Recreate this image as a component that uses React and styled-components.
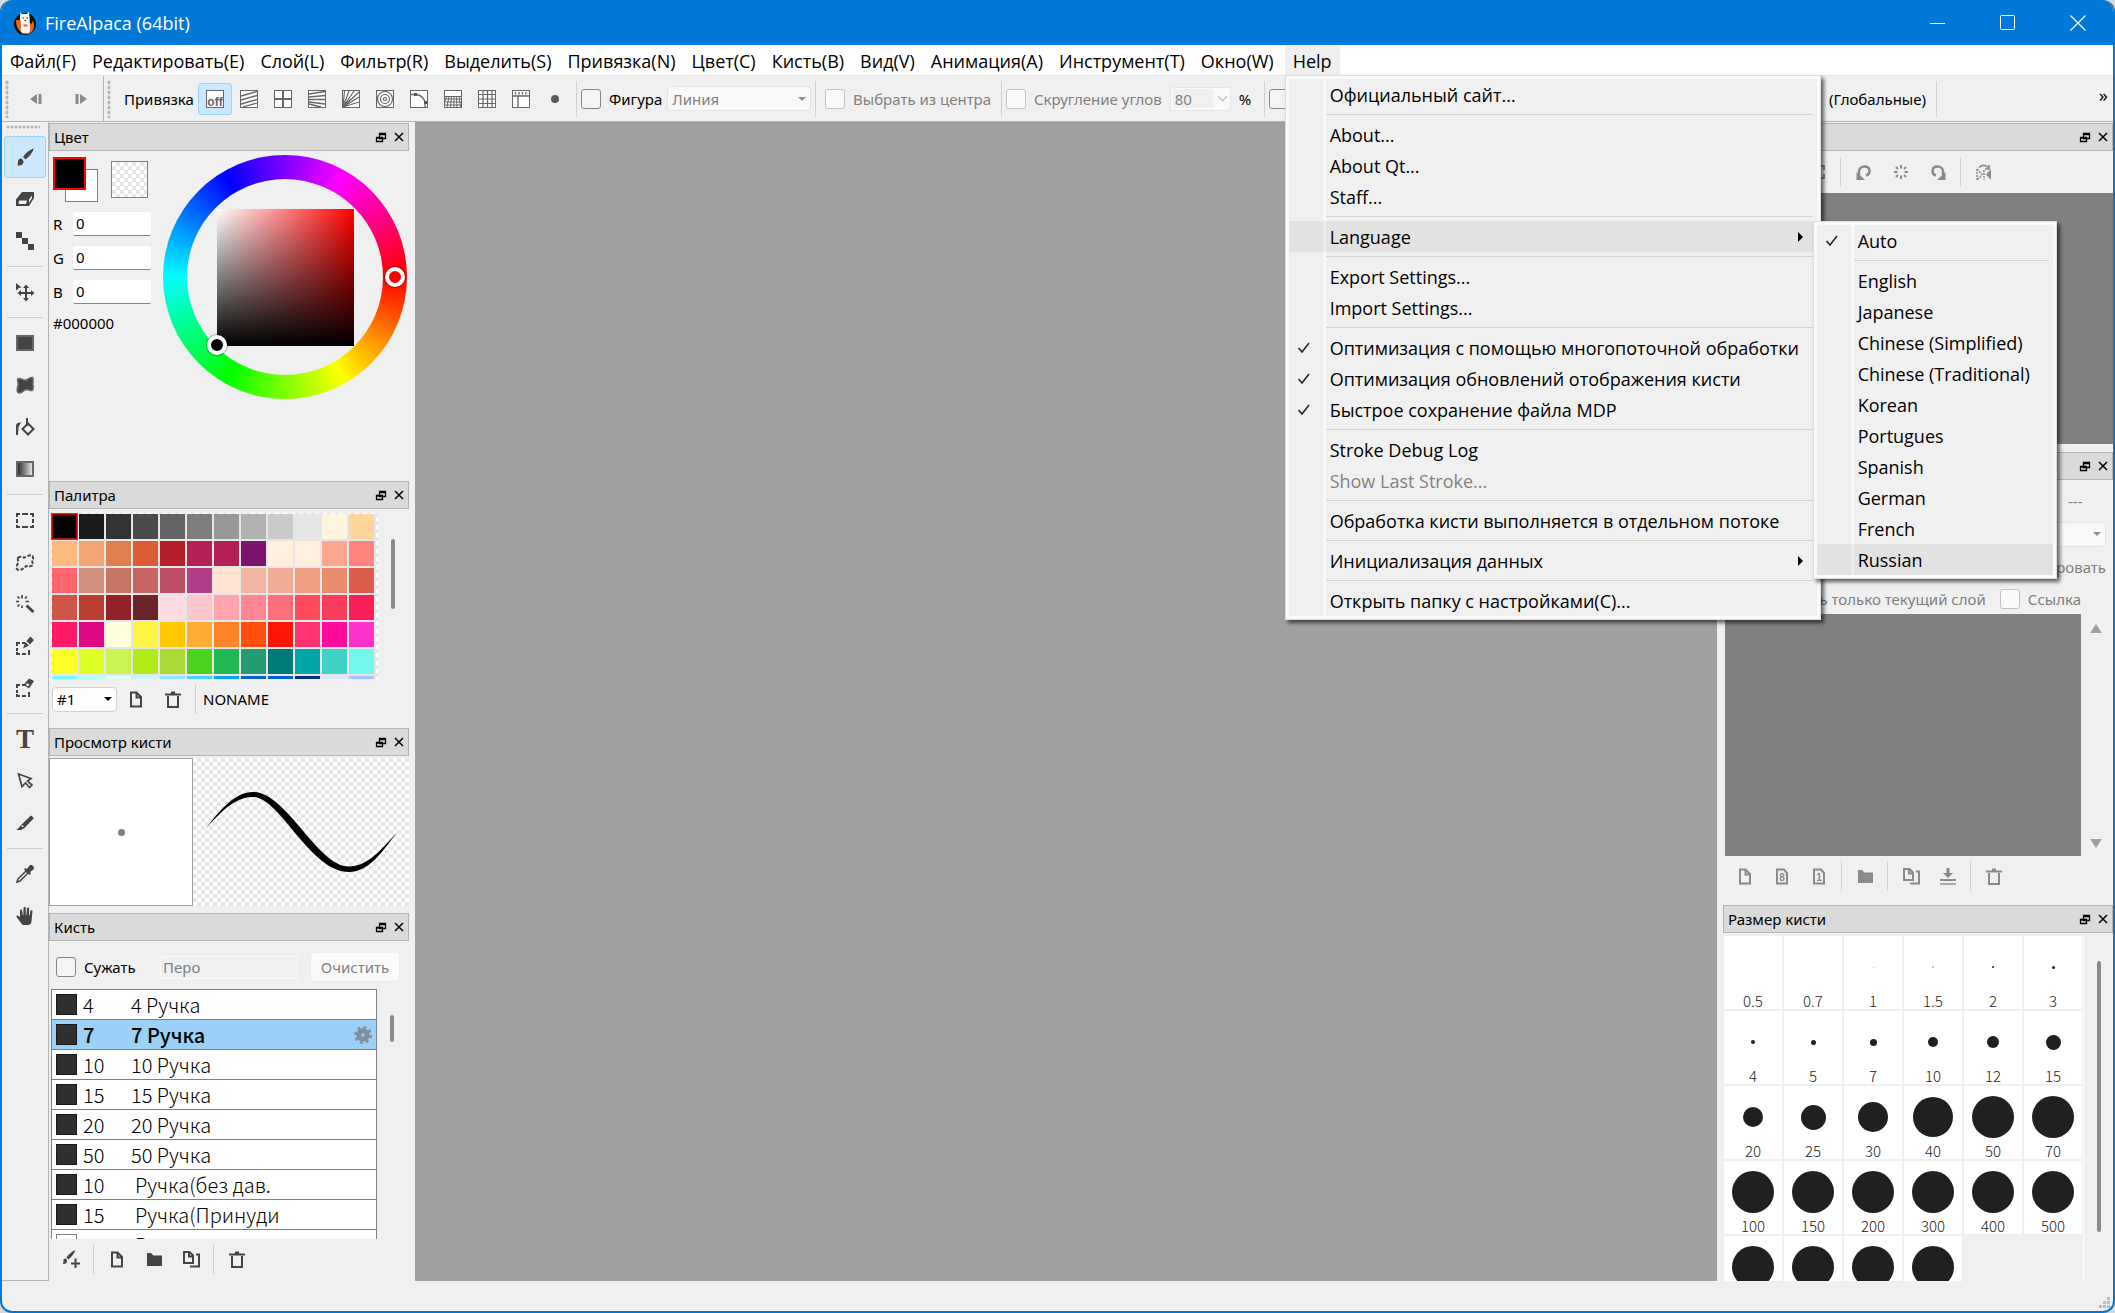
import React from "react"
import styled, { createGlobalStyle, css } from "styled-components"

const MENUS = [
  "Файл(F)",
  "Редактировать(E)",
  "Слой(L)",
  "Фильтр(R)",
  "Выделить(S)",
  "Привязка(N)",
  "Цвет(C)",
  "Кисть(B)",
  "Вид(V)",
  "Анимация(A)",
  "Инструмент(T)",
  "Окно(W)",
]

const HELP_ITEMS = [
  { label: "Официальный сайт..." },
  null,
  { label: "About..." },
  { label: "About Qt..." },
  { label: "Staff..." },
  null,
  { label: "Language", languages: true },
  null,
  { label: "Export Settings..." },
  { label: "Import Settings..." },
  null,
  { label: "Оптимизация с помощью многопоточной обработки", checked: true },
  { label: "Оптимизация обновлений отображения кисти", checked: true },
  { label: "Быстрое сохранение файла MDP", checked: true },
  null,
  { label: "Stroke Debug Log" },
  { label: "Show Last Stroke...", disabled: true },
  null,
  { label: "Обработка кисти выполняется в отдельном потоке" },
  null,
  { label: "Инициализация данных", arrow: true },
  null,
  { label: "Открыть папку с настройками(C)..." },
]

const LANGUAGE_ITEMS = [
  { label: "Auto", checked: true },
  null,
  { label: "English" },
  { label: "Japanese" },
  { label: "Chinese (Simplified)" },
  { label: "Chinese (Traditional)" },
  { label: "Korean" },
  { label: "Portugues" },
  { label: "Spanish" },
  { label: "German" },
  { label: "French" },
  { label: "Russian", hot: true },
]

const PALETTE = [
  "#000000 #1a1a1a #333333 #4b4b4b #646464 #7d7d7d #989898 #b1b1b1 #cbcbcb #e5e5e5 #fff5de #ffd79c",
  "#ffbb7f #f2a672 #e07f4f #d95c34 #b62129 #b42157 #b42157 #7c136c #fff0de #fff0de #fea58e #ff857c",
  "#ff666e #d0907c #c57561 #c76563 #bf5067 #b23e87 #ffe4d2 #f2b8a4 #f0ac95 #ef9e80 #ea8b6c #dc5d4a",
  "#cf5549 #bb3f30 #952129 #6b2429 #ffdbe2 #ffc5cd #ffa5ae #ff8793 #ff6f7c #ff4c5b #f83c5b #f81f58",
  "#ff1a68 #dd0883 #ffffdc #fff346 #ffc800 #ffad37 #ff8427 #ff4f09 #ff1506 #ff336f #ff0c9e #ff33cb",
  "#faff27 #deff26 #c8f350 #b1ec1a #aadb35 #49d31d #22b952 #249b72 #007a79 #00a8a8 #3ed1c4 #74f7e8",
  "#7bfaff #b4fff8 #e0ffff #c6f5ff #8de8ff #47d4ff #00a5ff #0064cc #0064cc #00307f #dae5ff #a8c1ff",
]

const BRUSHES = [
  { size: "4", name: "4 Ручка" },
  { size: "7", name: "7 Ручка", selected: true },
  { size: "10", name: "10 Ручка" },
  { size: "15", name: "15 Ручка" },
  { size: "20", name: "20 Ручка" },
  { size: "50", name: "50 Ручка" },
  { size: "10", name: "Ручка(без дав.", plain: true },
  { size: "15", name: "Ручка(Принуди", plain: true },
  { size: "", name: "Ручка", plain: true, empty: true },
]

const BRUSH_SIZES = [
  0.5, 0.7, 1, 1.5, 2, 3, 4, 5, 7, 10, 12, 15, 20, 25, 30, 40, 50, 70, 100,
  150, 200, 300, 400, 500, 700, 800, 900, 1000,
]

/* ICONS */
const frame = (
  <rect x=".5" y=".5" width="17" height="17" fill="#fff" stroke="#666" />
)

const ICONS = {
  off: (
    <>
      {frame}
      <text
        x="9"
        y="16"
        fontSize="12"
        fontWeight="700"
        fontFamily="Liberation Sans, sans-serif"
        textAnchor="middle"
        fill="#666"
      >
        off
      </text>
    </>
  ),
  parallel: (
    <>
      {frame}
      <path d="M1 6 17 1.500M1 10 17 5.500M1 14 17 9.500M3 17 17 13" stroke="#666" strokeWidth="1.300" />
    </>
  ),
  cross: (
    <>
      {frame}
      <path d="M9 1v16M1 9h16" stroke="#666" strokeWidth="2" />
    </>
  ),
  vanish: (
    <>
      {frame}
      <path d="M1 4 17 1.500M1 7 17 5.500M1 9.500 17 9.500M1 12 17 14M1 14 13 17" stroke="#666" strokeWidth="1.300" />
    </>
  ),
  radial: (
    <>
      {frame}
      <path d="M1 17 2.500 1M1 17 7 1M1 17 12 1M1 17 17 2M1 17 17 7M1 17 17 12M1 17 9 9" stroke="#666" strokeWidth="1.200" />
    </>
  ),
  circle: (
    <>
      {frame}
      <g fill="none" stroke="#666" strokeWidth="1.200">
        <circle cx="9" cy="9" r="7.500" />
        <circle cx="9" cy="9" r="4.500" />
        <circle cx="9" cy="9" r="1.500" />
      </g>
    </>
  ),
  curve: (
    <>
      {frame}
      <path d="M1 4.500h5C11 5 14 8 15 12.500V17" fill="none" stroke="#666" strokeWidth="1.300" />
      <path d="M4 3h3v3H4zM14 11h3v3h-3z" fill="#555" />
    </>
  ),
  persp: (
    <>
      {frame}
      <path d="M1 6.500h16M1 9h16M1 12h16M1 15h16M5 6 3 17M7.500 6 6.500 17M10 6v11M12.500 6 13 17M15 6l1.500 11M3 6 1 11" stroke="#666" />
    </>
  ),
  grid: (
    <>
      {frame}
      <path d="M5 1v16M9.500 1v16M14 1v16M1 4.500h16M1 9h16M1 13.500h16" stroke="#666" strokeWidth="1.200" />
    </>
  ),
  ruler: (
    <>
      {frame}
      <path d="M1 6h16M6 6v11M3.500 2v2.500M7 2v2.500M10.500 2v2.500M14 2v2.500" stroke="#666" strokeWidth="1.300" />
    </>
  ),
  dot: <circle cx="9" cy="9" r="4" fill="#5a5a5a" />,
  prev: <path d="M10 4v10L3 9zM11.500 4h3v10h-3z" fill="#8a8a8a" />,
  next: <path d="M8 4v10l7-5zM3.500 4h3v10h-3z" fill="#8a8a8a" />,
  brush: (
    <path
      d="M17.800.2C13 2 9 5.500 7 9l2.600 2.400C13 9 16.500 5 17.800.2zM5.500 10.500c-2.300-.3-3.800 1.500-3.500 3.500l-.5 3.500c3 .5 6.500-1 6-4.500z"
      fill="#444"
    />
  ),
  eraser: (
    <>
      <path d="M6 2h12v6l-5 8H0V9.500z" fill="#444" />
      <path d="M3 10.500h8l-1 3.500H2.500zM13 9.500l3-4v2.500l-3 5z" fill="#f0f0f0" />
    </>
  ),
  steps: <path d="M0 0h6v6H0zM6 6h6v6H6zM12 12h6v6h-6z" fill="#444" />,
  move: (
    <path
      d="M0 0 5.500 4.500 3 5 0 7.500zM10 1.500l3 3.500h-2v4h4V7l3.500 3-3.500 3v-2h-4v4h2l-3 3.500L7 15h2v-4H5v2l-3.500-3L5 7v2h4V5H7z"
      fill="#444"
    />
  ),
  rect: <rect x="1" y="2" width="16" height="14" fill="#444" stroke="#666" strokeWidth="2" />,
  blob: (
    <path
      d="M2.500 2.500c3-.500 5 2.500 8 1.500 2-1 3.500-3 6-2.500 1.500 2 0 4.500.5 7.500.500 3 .5 4.500-1 5.500-2 .500-4-1.500-6-1-2.500.500-3.500 3.500-6.500 3.500-3-.500-2.500-3-2-5.500s1-3 .5-5-1-3.500.5-4z"
      fill="#444"
      stroke="#6a6a6a"
      strokeWidth="1.500"
    />
  ),
  bucket: (
    <>
      <path d="M12 5.500 17.500 11 12 16.500 6.500 11zM11 0v8" fill="none" stroke="#444" strokeWidth="2" />
      <path d="M0 17V8c0-3 3-4 5-3.500L2.500 9 2 17z" fill="#444" />
    </>
  ),
  gradient: (
    <>
      <defs>
        <linearGradient id="tool-gradient">
          <stop offset="0" stopColor="#222" />
          <stop offset="1" stopColor="#f0f0f0" />
        </linearGradient>
      </defs>
      <rect x="1" y="2" width="16" height="14" fill="url(#tool-gradient)" stroke="#666" strokeWidth="2" />
    </>
  ),
  marquee: (
    <path
      d="M0 6V2h4v2H2v2zM6 2h6v2H6zM14 2h4v4h-2V4h-2zM0 8h2v4H0zM16 8h2v4h-2zM0 14h2v1h2v2H0zM6 15h6v2H6zM16 14h2v3h-4v-2h2z"
      fill="#444"
    />
  ),
  lasso: (
    <path
      d="M2 5c3-3 5 1 8-1s6-2.500 7 0c.5 3-2 4 0 7 0 3-4 2-6 2s-4 4-8 4-2-5-1-7-1-4 0-5z"
      fill="none"
      stroke="#444"
      strokeWidth="2"
      strokeDasharray="3.500 1.500"
    />
  ),
  wand: (
    <>
      <path d="M10.500 10.500 17.500 17" stroke="#444" strokeWidth="3" />
      <path
        d="M6 0v3.500M6 10.500V13M0 6.500h3M9.500 6.500H13M1.500 1.500l2 2M11 1.500l-2 2M1.500 11.500l2-2"
        stroke="#444"
        strokeWidth="1.700"
      />
    </>
  ),
  selectPen: (
    <>
      <path d="M0 9V5h4v2H2v2zM6 5h3v2H6zM0 11h2v3H0zM0 15h2v1h2v2H0zM6 16h4v2H6zM14 13v5h-2v-2h0v-3z" fill="#444" />
      <path d="M14.500-.5 18 3l-4 4.500-3.500-3.500zM9.500 5 13 8.500 7 11.500z" fill="#444" />
    </>
  ),
  selectEraser: (
    <>
      <path d="M0 9V5h4v2H2v2zM6 5h3v2H6zM0 11h2v3H0zM0 15h2v1h2v2H0zM6 16h4v2H6zM14 13v5h-2v-2h0v-3z" fill="#444" />
      <path d="M13-.5 18 2l-5 7.500L7.500 6z" fill="#444" />
      <path d="m11 4 2.500 1.500-1.500 2L9.800 6z" fill="#f0f0f0" />
    </>
  ),
  pointer: (
    <path
      d="M2.500 2 15 6.500 11.500 9l4.500 4-2.500 2.500L9.500 11 6 14.500z"
      fill="none"
      stroke="#444"
      strokeWidth="1.700"
    />
  ),
  knife: (
    <>
      <path d="M15 1.500 18 4 8.500 14 5 16H0c2-1 4-4 6-6z" fill="#444" />
      <circle cx="6.500" cy="12" r="1" fill="#f0f0f0" />
    </>
  ),
  dropper: (
    <>
      <path d="M1 17 2 14 10 6l2 2-8 8z" fill="none" stroke="#444" strokeWidth="1.500" />
      <path d="M8 4.500 9.500 3l1.500 1 2.500-3.500c2.500-1.500 5.500 1.500 4 4L14 7l1 1.500-1.500 1.500z" fill="#444" />
    </>
  ),
  hand: (
    <path
      d="M4 10V3.500c0-1.500 2-1.500 2.200 0L6.800 8h.6L7.500 1c0-1.500 2.300-1.500 2.300 0V8h.6l.6-6.500c.2-1.500 2.300-1.200 2.200.3L12.900 8.500h.6l.9-4.500c.4-1.400 2.300-1 2.100.5L15.500 14c-.3 3-1.500 4-4 4H8c-1.500 0-2-.5-3-2L.6 10c-.6-1.300.8-2 1.700-1z"
      fill="#444"
    />
  ),
  file: <path d="M4 2.500h5.500L14 7v9.500H4zM9.500 2.500V7.500H14" fill="none" stroke="currentColor" strokeWidth="2" />,
  trash: <path d="M1 4.500h16M7 2.500h4M4 6v11h10V6" fill="none" stroke="currentColor" strokeWidth="2" />,
  folder: <path d="M2 3h4l2.500 2.500H17V16H2z" fill="currentColor" />,
  copy: (
    <>
      <path d="M2 2h5.500L11 5.500V13H2zM7 2v4.500h4" fill="none" stroke="currentColor" strokeWidth="2" />
      <path d="M14 4.500h3V16.500H8" fill="none" stroke="currentColor" strokeWidth="2" />
    </>
  ),
  merge: (
    <>
      <path d="M7.500 1h3v5H14l-5 5-5-5h3.500zM1 12h16v2H1z" fill="currentColor" />
      <path d="M1 16h16v2H1z" fill="currentColor" opacity=".7" />
    </>
  ),
  brushAdd: (
    <path
      d="M13.500 0C9 2 6.500 4.500 4.500 7.500l2 2C9.500 7 12 4 13.500 0zM4 8.500c-2 0-3 1-2.500 3L1 14c2.500.3 4.500-1 4-4zM12.500 8.500h2v4H18v2h-3.500V18h-2v-3.500H9v-2h3.500z"
      fill="currentColor"
    />
  ),
  rotateLeft: (
    <>
      <path d="M4 12V8.500C4 5.500 6.500 3.500 9.500 3.500s5 1.800 5 4.500c0 2.200-1.500 4-3.500 4.500" fill="none" stroke="currentColor" strokeWidth="2.500" />
      <path d="M1.500 9v8H10z" fill="currentColor" />
    </>
  ),
  rotateRight: (
    <>
      <path d="M14 12V8.500C14 5.500 11.500 3.500 8.500 3.500s-5 1.800-5 4.500c0 2.200 1.500 4 3.500 4.500" fill="none" stroke="currentColor" strokeWidth="2.500" />
      <path d="M16.500 9v8H8z" fill="currentColor" />
    </>
  ),
  rays: (
    <path
      d="M9 2v3.500M9 12.500V16M2 9h3.500M12.500 9H16M4 4l2 2M14 4l-2 2M4 14l2-2M14 14l-2-2"
      stroke="currentColor"
      strokeWidth="2"
    />
  ),
  flip: (
    <>
      <path d="M16 6v11l-5-5.500z" fill="currentColor" />
      <path d="M2 6v11M2 6l5 5.500L2 17M9 7v10" fill="none" stroke="currentColor" strokeWidth="1.500" strokeDasharray="2 1" />
      <path d="M4 4.500c3-3 7-3 10 1M14 2v4h-4" fill="none" stroke="currentColor" strokeWidth="1.700" />
    </>
  ),
  expand: <path d="M11 3h4v4M15 11v4h-4M7 3H3v4M3 11v4h4" fill="none" stroke="currentColor" strokeWidth="2" />,
  gear: (
    <>
      <circle cx="9" cy="9" r="4.200" fill="none" stroke="#7f8f9c" strokeWidth="5" />
      <circle cx="9" cy="9" r="7.700" fill="none" stroke="#7f8f9c" strokeWidth="2.600" strokeDasharray="3.024 3.024" />
    </>
  ),
  check: <path d="M3.500 9 7 13 14 4" fill="none" stroke="#222" strokeWidth="1.500" />,
  caretRight: <path d="M6 4v10l5-5z" fill="#000" />,
  float: (
    <path d="M7.500 5.500h6v5h-6zM7.500 6.500h6M4.500 9.500h6v4h-6zM4.500 10h6" fill="#dadada" stroke="#000" strokeWidth="1.300" />
  ),
  close: <path d="m5 5 8 8M13 5l-8 8" stroke="#000" strokeWidth="1.500" />,
  minimize: <path d="M1 9.500h15" stroke="#fff" />,
  maximize: <rect x="1.500" y="1.500" width="14" height="14" rx="1" fill="none" stroke="#fff" />,
  exit: <path d="m1.500 1.500 15 15M16.500 1.500l-15 15" stroke="#fff" strokeWidth="1.200" />,
}

const Icon = ({ name }) => (
  <Svg viewBox="0 0 18 18" aria-hidden="true">
    {ICONS[name]}
  </Svg>
)

const PageIcon = ({ digit }) => (
  <Svg viewBox="0 0 18 18" aria-hidden="true">
    <path d="M4 2.500h7L14 6v10.500H4z" fill="none" stroke="currentColor" strokeWidth="2" />
    <text
      x="9"
      y="13.500"
      fontSize="10"
      fontWeight="700"
      textAnchor="middle"
      fontFamily="Liberation Sans, sans-serif"
      fill="currentColor"
    >
      {digit}
    </text>
  </Svg>
)

const Logo = () => (
  <LogoSvg viewBox="0 0 22 24" aria-hidden="true">
    <circle cx="11" cy="13" r="11" fill="#111" />
    <path d="M2 9c0 5 1 9 6 13l8 .5c4-3 5-8 3-13l-2 4-2-4z" fill="#e8661b" />
    <path d="M6.500 1 8 3h5l2-2.500L15.500 6c.5 3-.5 5 .5 8 .5 4 0 6-1.500 8.500h-6C6 20 7 16 7 13S5.500 9 6 6z" fill="#f6f6f6" />
    <path d="M8.500 7h1.500M12.500 7H14M10.500 9.500h1.500" stroke="#222" />
    <path d="M9.500 14.500h4" stroke="#e8661b" strokeWidth="2" />
  </LogoSvg>
)

/* PARTS */
const TOOLS = [
  "brush", "eraser", "steps", null, "move", null, "rect", "blob", "bucket",
  "gradient", null, "marquee", "lasso", "wand", "selectPen", "selectEraser",
  null, "text", "pointer", "knife", null, "dropper", "hand",
]

const SNAPS = [
  "off", "parallel", "cross", "vanish", "radial", "circle", "curve", "persp",
  "grid", "ruler", "dot",
]

const MenuList = ({ items }) =>
  items.map((item, i) =>
    item ? (
      <MenuRow key={i}>
        <MenuItem disabled={item.disabled} $hot={item.hot || item.languages}>
          <MenuMark>{item.checked && <Icon name="check" />}</MenuMark>
          <MenuLabel>{item.label}</MenuLabel>
          {(item.arrow || item.languages) && <Icon name="caretRight" />}
        </MenuItem>
        {item.languages && (
          <SubMenu>
            <MenuList items={LANGUAGE_ITEMS} />
          </SubMenu>
        )}
      </MenuRow>
    ) : (
      <MenuLine key={i} />
    )
  )

const DockTitle = ({ children }) => (
  <DockHeader>
    <DockName>{children}</DockName>
    <DockButton aria-label="Открепить">
      <Icon name="float" />
    </DockButton>
    <DockButton aria-label="Закрыть">
      <Icon name="close" />
    </DockButton>
  </DockHeader>
)

const IconButton = ({ name, label, disabled }) => (
  <FooterButton aria-label={label || name} disabled={disabled}>
    <Icon name={name} />
  </FooterButton>
)

const Channel = ({ name }) => (
  <ChannelRow>
    <ChannelLabel htmlFor={`channel-${name}`}>{name}</ChannelLabel>
    <ChannelInput id={`channel-${name}`} defaultValue="0" />
  </ChannelRow>
)

const Select = ({ value, label, width, disabled }) => (
  <SelectBox $width={width}>
    <SelectField aria-label={label} disabled={disabled} defaultValue={value}>
      <option>{value}</option>
    </SelectField>
    <Caret $dim={disabled} />
  </SelectBox>
)

const ColorDock = () => (
  <Dock $height={358}>
    <DockTitle>Цвет</DockTitle>
    <ColorBody>
      <ColorSide>
        <SwatchRow>
          <SwatchPair>
            <BackSwatch />
            <FrontSwatch />
          </SwatchPair>
          <ClearSwatch />
        </SwatchRow>
        <Channel name="R" />
        <Channel name="G" />
        <Channel name="B" />
        <Hex>#000000</Hex>
      </ColorSide>
      <Wheel>
        <WheelHole>
          <Shade />
        </WheelHole>
        <Knob $x={232} $y={122} $color="#f00" />
        <Knob $x={54} $y={190} $color="#000" />
      </Wheel>
    </ColorBody>
  </Dock>
)

const PaletteDock = () => (
  <Dock $height={247}>
    <DockTitle>Палитра</DockTitle>
    <ScrollArea>
      <PaletteBox>
        <PaletteGrid>
          {PALETTE.join(" ")
            .split(" ")
            .map((color, i) => (
              <Cell key={i} $color={color} $active={i === 0} aria-label={color} />
            ))}
        </PaletteGrid>
      </PaletteBox>
      <Thumb $top={26} $size={70} />
    </ScrollArea>
    <Footer>
      <Select value="#1" label="Палитра" width={65} />
      <IconButton name="file" label="Новый цвет" />
      <IconButton name="trash" label="Удалить цвет" />
      <Divider />
      <PaletteName>NONAME</PaletteName>
    </Footer>
  </Dock>
)

const PreviewDock = () => (
  <Dock $height={185}>
    <DockTitle>Просмотр кисти</DockTitle>
    <PreviewBody>
      <PreviewTip>
        <Dot $size={7} $color="#808080" />
      </PreviewTip>
      <PreviewStroke>
        <svg viewBox="193 758 216 148" width="100%" height="100%" aria-hidden="true">
          <path
            d="M205 830C221 808 236 792 253 792C287 792 317 866.500 349 866.500C366 866.500 380 852 397 832C382 853 368 872 349 872C310 872 280 797 253 797C238 797 224 807 205 830Z"
            fill="#000"
          />
        </svg>
      </PreviewStroke>
    </PreviewBody>
  </Dock>
)

const BrushDock = () => (
  <Dock $grow>
    <DockTitle>Кисть</DockTitle>
    <FilterRow>
      <Check type="checkbox" id="narrow" />
      <FilterLabel htmlFor="narrow">Сужать</FilterLabel>
      <FilterInput aria-label="Фильтр" defaultValue="Перо" disabled />
      <ClearButton disabled>Очистить</ClearButton>
    </FilterRow>
    <BrushScroll>
      <BrushList>
        {BRUSHES.map((brush, i) => (
          <BrushRow key={i} $selected={brush.selected}>
            <BrushColor $empty={brush.empty} />
            <BrushSize>{brush.size}</BrushSize>
            <BrushName $plain={brush.plain}>{brush.name}</BrushName>
            {brush.selected && <Icon name="gear" />}
          </BrushRow>
        ))}
      </BrushList>
      <Thumb $top={26} $size={27} />
    </BrushScroll>
    <Footer>
      <IconButton name="brushAdd" label="Добавить кисть" />
      <Divider />
      <IconButton name="file" label="Новая кисть" />
      <IconButton name="folder" label="Новая группа" />
      <IconButton name="copy" label="Дублировать кисть" />
      <Divider />
      <IconButton name="trash" label="Удалить кисть" />
    </Footer>
  </Dock>
)

const RightDocks = () => (
  <RightColumn>
    <Dock $height={329}>
      <DockTitle>Навигатор</DockTitle>
      <NavTools>
        <IconButton name="merge" disabled />
        <IconButton name="rays" disabled />
        <IconButton name="expand" disabled />
        <Divider />
        <IconButton name="rotateLeft" disabled />
        <IconButton name="rays" disabled />
        <IconButton name="rotateRight" disabled />
        <Divider />
        <IconButton name="flip" disabled />
      </NavTools>
      <NavView />
    </Dock>
    <Dock $height={453}>
      <DockTitle>Слой</DockTitle>
      <LayerOptions>
        <LayerRow $height={34}>
          <Opacity>---</Opacity>
        </LayerRow>
        <LayerRow $height={32}>
          <Select value="" label="Смешивание" width={240} disabled />
        </LayerRow>
        <LayerRow $height={34}>
          <DimText>Блокировать</DimText>
        </LayerRow>
        <LayerRow $height={30} $link>
          <DimText>Показать только текущий слой</DimText>
          <LinkField>
            <Check type="checkbox" id="layer-link" disabled />
            <DimLabel htmlFor="layer-link">Ссылка</DimLabel>
          </LinkField>
        </LayerRow>
      </LayerOptions>
      <LayerArea>
        <LayerList />
        <ArrowTrack>
          <Arrow />
          <Arrow $down />
        </ArrowTrack>
      </LayerArea>
      <LayerTools>
        <IconButton name="file" disabled />
        <FooterButton aria-label="8 бит" disabled>
          <PageIcon digit="8" />
        </FooterButton>
        <FooterButton aria-label="1 бит" disabled>
          <PageIcon digit="1" />
        </FooterButton>
        <Divider />
        <IconButton name="folder" disabled />
        <Divider />
        <IconButton name="copy" disabled />
        <IconButton name="merge" disabled />
        <Divider />
        <IconButton name="trash" disabled />
      </LayerTools>
    </Dock>
    <Dock $grow>
      <DockTitle>Размер кисти</DockTitle>
      <SizeArea>
        <SizeGrid>
          {BRUSH_SIZES.map((size) => (
            <SizeCell key={size} aria-label={size}>
              <SizeDot>
                <Dot
                  $size={Math.max(1, Math.min(42, Math.round(size)))}
                  $color={size < 1 ? "#e8e8e8" : size < 2 ? "#b0b0b0" : "#202020"}
                />
              </SizeDot>
              {size <= 500 && <SizeText>{size}</SizeText>}
            </SizeCell>
          ))}
        </SizeGrid>
        <Thumb $top={27} $size={271} />
      </SizeArea>
    </Dock>
  </RightColumn>
)

const App = () => {
  return (
    <>
      <GlobalStyle />
      <Window>
        <TitleBar>
          <Logo />
          <Title>FireAlpaca (64bit)</Title>
          <WindowButton aria-label="Свернуть">
            <Icon name="minimize" />
          </WindowButton>
          <WindowButton aria-label="Развернуть">
            <Icon name="maximize" />
          </WindowButton>
          <WindowButton aria-label="Закрыть">
            <Icon name="exit" />
          </WindowButton>
        </TitleBar>

        <MenuBar>
          {MENUS.map((menu) => (
            <MenuButton key={menu}>{menu}</MenuButton>
          ))}
          <MenuAnchor>
            <MenuButton $open>Help</MenuButton>
            <Menu>
              <MenuList items={HELP_ITEMS} />
            </Menu>
          </MenuAnchor>
        </MenuBar>

        <Toolbar>
          <Grip />
          <HistoryButton aria-label="Назад" disabled>
            <Icon name="prev" />
          </HistoryButton>
          <HistoryButton aria-label="Вперёд" disabled>
            <Icon name="next" />
          </HistoryButton>
          <ToolbarEdge />
          <Grip />
          <SnapLabel>Привязка</SnapLabel>
          <SnapGroup>
            {SNAPS.map((name) => (
              <SnapButton key={name} aria-label={name} $active={name === "off"}>
                <Icon name={name} />
              </SnapButton>
            ))}
          </SnapGroup>
          <OptionGroup $width={239}>
            <Check type="checkbox" id="shape" />
            <OptionLabel htmlFor="shape">Фигура</OptionLabel>
            <Select value="Линия" label="Фигура" width={144} disabled />
          </OptionGroup>
          <OptionGroup $width={186} $inset>
            <Check type="checkbox" id="from-center" disabled />
            <OptionLabel htmlFor="from-center" $dim>
              Выбрать из центра
            </OptionLabel>
          </OptionGroup>
          <OptionGroup $width={263}>
            <Check type="checkbox" id="round" disabled />
            <OptionLabel htmlFor="round" $dim>
              Скругление углов
            </OptionLabel>
            <Spin>
              <SpinInput aria-label="Скругление" defaultValue="80" disabled />
              <Chevron />
            </Spin>
            <Percent>%</Percent>
          </OptionGroup>
          <OptionGroup $width={60}>
            <Check type="checkbox" aria-label="Сглаживание" />
          </OptionGroup>
          <GlobalGroup>
            <span>(Глобальные)</span>
          </GlobalGroup>
          <More aria-label="Ещё">»</More>
        </Toolbar>

        <Body>
          <ToolStrip>
            <StripGrip />
            {TOOLS.map((tool, i) =>
              tool ? (
                <ToolButton key={i} aria-label={tool} $active={tool === "brush"}>
                  {tool === "text" ? <TextTool>T</TextTool> : <Icon name={tool} />}
                </ToolButton>
              ) : (
                <StripLine key={i} />
              )
            )}
          </ToolStrip>
          <LeftColumn>
            <ColorDock />
            <PaletteDock />
            <PreviewDock />
            <BrushDock />
          </LeftColumn>
          <Canvas />
          <RightDocks />
        </Body>

        <StatusBar>
          <svg width="12" height="12" aria-hidden="true">
            <path
              d="M8 0h3v3H8zM4 4h3v3H4zM8 4h3v3H8zM0 8h3v3H0zM4 8h3v3H4zM8 8h3v3H8z"
              fill="#bcbcbc"
            />
          </svg>
        </StatusBar>
      </Window>
    </>
  )
}

/* STYLE */
const uiFont = `"Open Sans", "Noto Sans", sans-serif`
const dockFont = `"Noto Sans", "Open Sans", sans-serif`
const listFont = `"Noto Sans CJK JP", sans-serif`

const checker = css`
  background: repeating-conic-gradient(#e6e6e6 0 25%, #fff 0 50%) 0 0 / 8px 8px;
`

const GlobalStyle = createGlobalStyle`
  * {
    box-sizing: border-box;
  }
  body {
    margin: 0;
    background: #d8d8d8;
    font-family: ${dockFont};
    font-size: 15px;
    line-height: 20px;
    color: #000;
  }
  button, input, select {
    margin: 0;
    padding: 0;
    border: 0;
    background: none;
    font: inherit;
    color: inherit;
  }
`

const Svg = styled.svg`
  display: block;
  flex: none;
  width: 18px;
  height: 18px;
  overflow: visible;
`

const Window = styled.div`
  display: flex;
  flex-direction: column;
  height: 100vh;
  border: 2px solid #0078d7;
  border-top: 0;
  border-radius: 12px;
  overflow: hidden;
  background: #f0f0f0;
`

const TitleBar = styled.div`
  display: flex;
  flex: none;
  align-items: center;
  height: 45px;
  padding-left: 12px;
  background: #0078d7;
  color: #fff;
  font-family: ${uiFont};
  font-size: 18px;
`

const LogoSvg = styled.svg`
  width: 22px;
  height: 24px;
`

const Title = styled.div`
  flex: 1;
  margin-left: 9px;
`

const WindowButton = styled.button`
  display: flex;
  align-items: center;
  justify-content: center;
  width: 70px;
  height: 45px;
`

const MenuBar = styled.div`
  display: flex;
  flex: none;
  height: 31px;
  background: #fff;
  border-bottom: 1px solid #e4e4e4;
  font-family: ${uiFont};
  font-size: 18px;
`

const MenuButton = styled.button`
  height: 30px;
  padding: 1px 8px 0;
  border-radius: 4px 4px 0 0;
  white-space: nowrap;
  background: ${({ $open }) => ($open ? "#efefef" : "none")};
`

const MenuAnchor = styled.div`
  position: relative;
  z-index: 2;
  margin-left: 3px;
`

const menuPanel = css`
  position: absolute;
  padding: 3px;
  border: 1px solid #dedede;
  background: linear-gradient(
    to right,
    #f0f0f0 34px,
    #fafafa 34px,
    #fafafa 37px,
    #f0f0f0 37px
  );
  background-clip: content-box;
  background-origin: content-box;
  box-shadow: inset 0 0 0 3px #fafafa, 3px 3px 4px rgba(0, 0, 0, 0.6);
`

const Menu = styled.div`
  ${menuPanel}
  left: 0;
  top: 30px;
  min-width: 536px;
`

const SubMenu = styled.div`
  ${menuPanel}
  left: calc(100% - 4px);
  top: 0;
  min-width: 244px;
`

const MenuRow = styled.div`
  position: relative;
`

const MenuItem = styled.button`
  display: flex;
  align-items: center;
  width: 100%;
  height: 31px;
  padding-right: 7px;
  text-align: left;
  white-space: nowrap;
  background: ${({ $hot }) => ($hot ? "rgba(0, 0, 0, 0.055)" : "none")};
  color: ${({ disabled }) => (disabled ? "#828282" : "#000")};
`

const MenuMark = styled.span`
  width: 41px;
  padding-left: 6px;
`

const MenuLabel = styled.span`
  flex: 1;
`

const MenuLine = styled.div`
  height: 1px;
  margin: 4px 4px 4px 37px;
  background: #d4d4d4;
`

const Toolbar = styled.div`
  display: flex;
  flex: none;
  align-items: center;
  height: 46px;
  border-bottom: 1px solid #b4b4b4;
  overflow: hidden;
`

const Grip = styled.div`
  width: 4px;
  height: 38px;
  margin: 0 4px 0 3px;
  background: radial-gradient(#b8b8b8 1px, transparent 2px) 0 0 / 4px 5px;
`

const HistoryButton = styled.button`
  display: flex;
  justify-content: center;
  width: 45px;
`

const ToolbarEdge = styled.div`
  align-self: stretch;
  width: 1px;
  background: #b4b4b4;
`

const SnapLabel = styled.span`
  width: 83px;
  padding-left: 9px;
  white-space: nowrap;
`

const SnapGroup = styled.div`
  display: flex;
  flex: none;
  margin-right: 4px;
`

const SnapButton = styled.button`
  display: flex;
  flex: none;
  align-items: center;
  justify-content: center;
  width: 34px;
  height: 32px;
  border-radius: 3px;
  border: 1px solid ${({ $active }) => ($active ? "#99d1ff" : "transparent")};
  background: ${({ $active }) => ($active ? "#cce8ff" : "none")};
`

const OptionGroup = styled.div`
  display: flex;
  flex: none;
  align-items: center;
  width: ${({ $width }) => $width}px;
  height: 36px;
  padding-left: ${({ $inset }) => ($inset ? 9 : 4)}px;
  border-left: 1px solid #cfcfcf;
`

const Check = styled.input`
  appearance: none;
  flex: none;
  width: 20px;
  height: 20px;
  border: 1px solid ${({ disabled }) => (disabled ? "#c3c3c3" : "#868686")};
  border-radius: 3px;
  background: ${({ disabled }) => (disabled ? "#fafafa" : "#f4f4f4")};
`

const OptionLabel = styled.label`
  padding: 0 5px 0 8px;
  white-space: nowrap;
  color: ${({ $dim }) => ($dim ? "#808080" : "#000")};
`

const SelectBox = styled.div`
  display: grid;
  flex: none;
  align-items: center;
  width: ${({ $width }) => $width}px;
`

const SelectField = styled.select`
  appearance: none;
  grid-area: 1 / 1;
  height: 25px;
  padding-left: 4px;
  border: 1px solid ${({ disabled }) => (disabled ? "#e4e4e4" : "#d0d0d0")};
  border-radius: 4px;
  background: ${({ disabled }) => (disabled ? "#f9f9f9" : "#fdfdfd")};
  color: ${({ disabled }) => (disabled ? "#808080" : "#000")};
  opacity: 1;
`

const Caret = styled.span`
  grid-area: 1 / 1;
  justify-self: end;
  margin-right: 5px;
  border: 4px solid transparent;
  border-top-color: ${({ $dim }) => ($dim ? "#909090" : "#000")};
  border-bottom-width: 0;
  pointer-events: none;
`

const Spin = styled.div`
  display: flex;
  align-items: center;
  width: 61px;
  height: 24px;
  margin-left: 3px;
  padding: 2px;
  border: 1px solid #e6e6e6;
  border-radius: 3px;
  background: #fafafa;
`

const SpinInput = styled.input`
  width: 40px;
  height: 19px;
  padding-left: 2px;
  background: #f0f0f0;
  color: #808080;
`

const Chevron = styled.span`
  width: 7px;
  height: 7px;
  margin: 0 0 4px 6px;
  border: solid #b0b0b0;
  border-width: 0 1px 1px 0;
  transform: rotate(45deg);
`

const Percent = styled.span`
  margin-left: 8px;
`

const GlobalGroup = styled.div`
  display: flex;
  align-items: center;
  height: 36px;
  margin-left: auto;
  padding-right: 10px;
  border-right: 1px solid #cfcfcf;
`

const More = styled.button`
  width: 176px;
  height: 34px;
  padding: 0 5px 8px 0;
  text-align: right;
  font-size: 18px;
`

const Body = styled.div`
  display: flex;
  flex: 1;
  min-height: 0;
`

const ToolStrip = styled.div`
  display: flex;
  flex: none;
  flex-direction: column;
  width: 47px;
  padding: 2px 2px 0;
  border-right: 1px solid #b4b4b4;
  border-bottom: 1px solid #b4b4b4;
`

const StripGrip = styled.div`
  height: 4px;
  margin: 1px 6px 7px 2px;
  background: radial-gradient(#b8b8b8 1px, transparent 2px) 0 0 / 4px 4px;
`

const ToolButton = styled.button`
  display: flex;
  align-items: center;
  justify-content: center;
  height: 42px;
  border: 1px solid ${({ $active }) => ($active ? "#99d1ff" : "transparent")};
  border-radius: 3px;
  background: ${({ $active }) => ($active ? "#cce8ff" : "none")};
`

const TextTool = styled.span`
  font-family: "Liberation Serif", serif;
  font-size: 27px;
  font-weight: 700;
  color: #444;
`

const StripLine = styled.div`
  height: 1px;
  margin: 4px 3px;
  background: #cdcdcd;
`

const LeftColumn = styled.div`
  display: flex;
  flex: none;
  flex-direction: column;
  width: 366px;
  padding: 1px 6px 0 0;
`

const RightColumn = styled(LeftColumn)`
  width: 396px;
  padding: 1px 0 0 6px;
`

const Canvas = styled.main`
  flex: 1;
  background: #a0a0a0;
`

const Dock = styled.section`
  display: flex;
  flex-direction: column;
  flex: ${({ $grow, $height }) => ($grow ? "1 1 0" : `0 0 ${$height}px`)};
  min-height: 0;
`

const DockHeader = styled.header`
  display: flex;
  flex: none;
  align-items: center;
  height: 28px;
  padding-left: 4px;
  border: 1px solid #b4b4b4;
  background: #dadada;
`

const DockName = styled.h2`
  flex: 1;
  margin: 0;
  font-size: 15px;
  font-weight: 400;
`

const DockButton = styled.button`
  width: 18px;
  height: 18px;
`

const ColorBody = styled.div`
  display: flex;
  justify-content: space-between;
  padding: 4px 2px 0 4px;
`

const ColorSide = styled.div`
  display: flex;
  flex-direction: column;
  gap: 10px;
  padding-top: 2px;
`

const SwatchRow = styled.div`
  display: flex;
  align-items: center;
  gap: 13px;
`

/* the front swatch lies over the back one */
const SwatchPair = styled.div`
  position: relative;
  width: 45px;
  height: 45px;
`

const FrontSwatch = styled.div`
  position: absolute;
  left: 0;
  top: 0;
  width: 33px;
  height: 33px;
  border: 2px solid #f00;
  background: #000;
`

const BackSwatch = styled(FrontSwatch)`
  left: 12px;
  top: 12px;
  border: 1px solid #808080;
  background: #fff;
`

const ClearSwatch = styled.div`
  width: 37px;
  height: 37px;
  border: 1px solid #808080;
  ${checker}
`

const ChannelRow = styled.div`
  display: flex;
  align-items: center;
  height: 24px;
`

const ChannelLabel = styled.label`
  width: 20px;
`

const ChannelInput = styled.input`
  width: 78px;
  height: 24px;
  padding: 0 0 1px 3px;
  border-bottom: 1px solid #868686;
  border-radius: 2px;
  background: #fff;
`

const Hex = styled.div`
  line-height: 18px;
`

const Wheel = styled.div`
  position: relative;
  display: flex;
  align-items: center;
  justify-content: center;
  width: 244px;
  height: 244px;
  border-radius: 50%;
  background: conic-gradient(
    from 90deg,
    #f00,
    #ff0,
    #0f0,
    #0ff,
    #00f,
    #f0f,
    #f00
  );
`

const WheelHole = styled.div`
  display: flex;
  align-items: center;
  justify-content: center;
  width: 196px;
  height: 196px;
  border-radius: 50%;
  background: #f0f0f0;
`

const Shade = styled.div`
  width: 137px;
  height: 137px;
  background: linear-gradient(to top, #000, transparent),
    linear-gradient(to right, #fff, #f00);
`

const Knob = styled.div`
  position: absolute;
  left: ${({ $x }) => $x - 10}px;
  top: ${({ $y }) => $y - 10}px;
  width: 20px;
  height: 20px;
  border: 4px solid #fff;
  border-radius: 50%;
  background: ${({ $color }) => $color};
  box-shadow: 0 0 1px 1px rgba(0, 0, 0, 0.25);
`

const ScrollArea = styled.div`
  display: flex;
  padding: 4px 0 0 2px;
`

const PaletteBox = styled.div`
  width: 327px;
  height: 166px;
  padding: 1px;
  overflow: hidden;
  ${checker}
`

const PaletteGrid = styled.div`
  display: grid;
  grid-template-columns: repeat(12, 25px);
  grid-auto-rows: 25px;
  gap: 2px;
  width: 324px;
  background: #e6e6e6;
`

const Cell = styled.button`
  background: ${({ $color }) => $color};
  ${({ $active }) =>
    $active &&
    css`
      border: 1px solid #a00;
      outline: 1px solid #f02020;
    `}
`

const Thumb = styled.div`
  width: 4px;
  height: ${({ $size }) => $size}px;
  margin: ${({ $top }) => $top}px 0 0 13px;
  border-radius: 2px;
  background: #8a8a8a;
`

const Footer = styled.div`
  display: flex;
  flex: none;
  align-items: center;
  height: 42px;
  padding: 0 0 2px 3px;
`

const FooterButton = styled.button`
  display: flex;
  flex: none;
  align-items: center;
  justify-content: center;
  width: 37px;
  height: 28px;
  color: ${({ disabled }) => (disabled ? "#8a8a8a" : "#444")};
`

const Divider = styled.div`
  width: 1px;
  height: 30px;
  margin: 0 4px;
  background: #cfcfcf;
`

const PaletteName = styled.span`
  padding-left: 3px;
`

const PreviewBody = styled.div`
  display: flex;
  height: 150px;
  padding-top: 2px;
`

const PreviewTip = styled.div`
  display: flex;
  align-items: center;
  justify-content: center;
  width: 144px;
  border: 1px solid #a0a0a0;
  background: #fff;
`

const PreviewStroke = styled.div`
  flex: 1;
  ${checker}
`

const Dot = styled.span`
  width: ${({ $size }) => $size}px;
  height: ${({ $size }) => $size}px;
  border-radius: 50%;
  background: ${({ $color }) => $color};
`

const FilterRow = styled.div`
  display: flex;
  flex: none;
  align-items: center;
  height: 48px;
  padding: 4px 0 0 7px;
`

const FilterLabel = styled.label`
  width: 84px;
  padding-left: 8px;
`

const FilterInput = styled.input`
  width: 138px;
  height: 23px;
  margin-right: 12px;
  padding-left: 2px;
  border: 1px solid #fafafa;
  color: #808080;
`

const ClearButton = styled.button`
  width: 90px;
  height: 30px;
  border: 1px solid #ececec;
  border-radius: 4px;
  background: #fafafa;
  color: #808080;
`

const BrushScroll = styled.div`
  display: flex;
  flex: 1;
  min-height: 0;
  padding-left: 2px;
`

const BrushList = styled.ul`
  width: 326px;
  margin: 0;
  padding: 0;
  overflow: hidden;
  list-style: none;
  border: 1px solid #808080;
  border-bottom: 0;
  background: #fff;
  font-family: ${listFont};
  font-size: 20px;
  font-weight: 300;
`

const BrushRow = styled.li`
  display: flex;
  align-items: center;
  height: 30px;
  padding: 0 4px;
  border-bottom: 1px solid #808080;
  background: ${({ $selected }) => ($selected ? "#9bd0f9" : "#fff")};
  font-weight: ${({ $selected }) => ($selected ? 500 : 300)};
`

const BrushColor = styled.span`
  flex: none;
  width: 21px;
  height: 21px;
  border: 1px solid ${({ $empty }) => ($empty ? "#808080" : "#181818")};
  background: ${({ $empty }) => ($empty ? "#fff" : "#303030")};
`

const BrushSize = styled.span`
  flex: none;
  width: 54px;
  padding-left: 6px;
`

const BrushName = styled.span`
  flex: 1;
  white-space: nowrap;
  padding-left: ${({ $plain }) => ($plain ? 4 : 0)}px;
`

const NavTools = styled.div`
  display: flex;
  flex: none;
  align-items: center;
  height: 42px;
  padding-left: 2px;
`

const NavView = styled.div`
  flex: none;
  height: 251px;
  background: #808080;
`

const LayerOptions = styled.div`
  flex: none;
  padding: 4px 7px 0 0;
`

const LayerRow = styled.div`
  display: flex;
  align-items: center;
  justify-content: flex-end;
  gap: 14px;
  height: ${({ $height }) => $height}px;
  padding-right: ${({ $link }) => ($link ? 25 : 0)}px;
`

const LinkField = styled.div`
  display: flex;
  align-items: center;
`

const Opacity = styled.span`
  width: 38px;
  color: #808080;
`

const DimText = styled.span`
  color: #808080;
  white-space: nowrap;
`

const DimLabel = styled.label`
  padding-left: 8px;
  color: #808080;
`

const LayerArea = styled.div`
  display: flex;
  height: 242px;
  padding-left: 2px;
`

const LayerList = styled.div`
  width: 356px;
  background: #808080;
`

const ArrowTrack = styled.div`
  display: flex;
  flex: 1;
  flex-direction: column;
  align-items: center;
  justify-content: space-between;
  padding: 10px 2px 8px 0;
`

const Arrow = styled.span`
  border: 6px solid transparent;
  border-width: ${({ $down }) => ($down ? "9px 6px 0" : "0 6px 9px")};
  border-top-color: ${({ $down }) => ($down ? "#a0a0a0" : "transparent")};
  border-bottom-color: ${({ $down }) => ($down ? "transparent" : "#a0a0a0")};
`

const LayerTools = styled.div`
  display: flex;
  align-items: center;
  height: 40px;
  padding-left: 3px;
`

const SizeArea = styled.div`
  display: flex;
  min-height: 0;
  flex: 1;
  padding: 1px 0 0 1px;
`

const SizeGrid = styled.div`
  display: grid;
  grid-template-columns: repeat(6, 58px);
  grid-auto-rows: 73px;
  gap: 2px;
  width: 360px;
  padding-top: 2px;
  overflow: hidden;
  border-right: 1px solid #fff;
`

const SizeCell = styled.button`
  display: flex;
  flex-direction: column;
  align-items: center;
  background: #fff;
`

const SizeDot = styled.span`
  display: flex;
  flex: none;
  align-items: center;
  height: 54px;
  padding-top: 8px;
`

const SizeText = styled.span`
  font-family: ${listFont};
  font-size: 15px;
  font-weight: 300;
  line-height: 22px;
  color: #222;
`

const StatusBar = styled.footer`
  display: flex;
  flex: none;
  align-items: flex-end;
  justify-content: flex-end;
  height: 30px;
  padding: 0 2px 2px 0;
`

export default App
